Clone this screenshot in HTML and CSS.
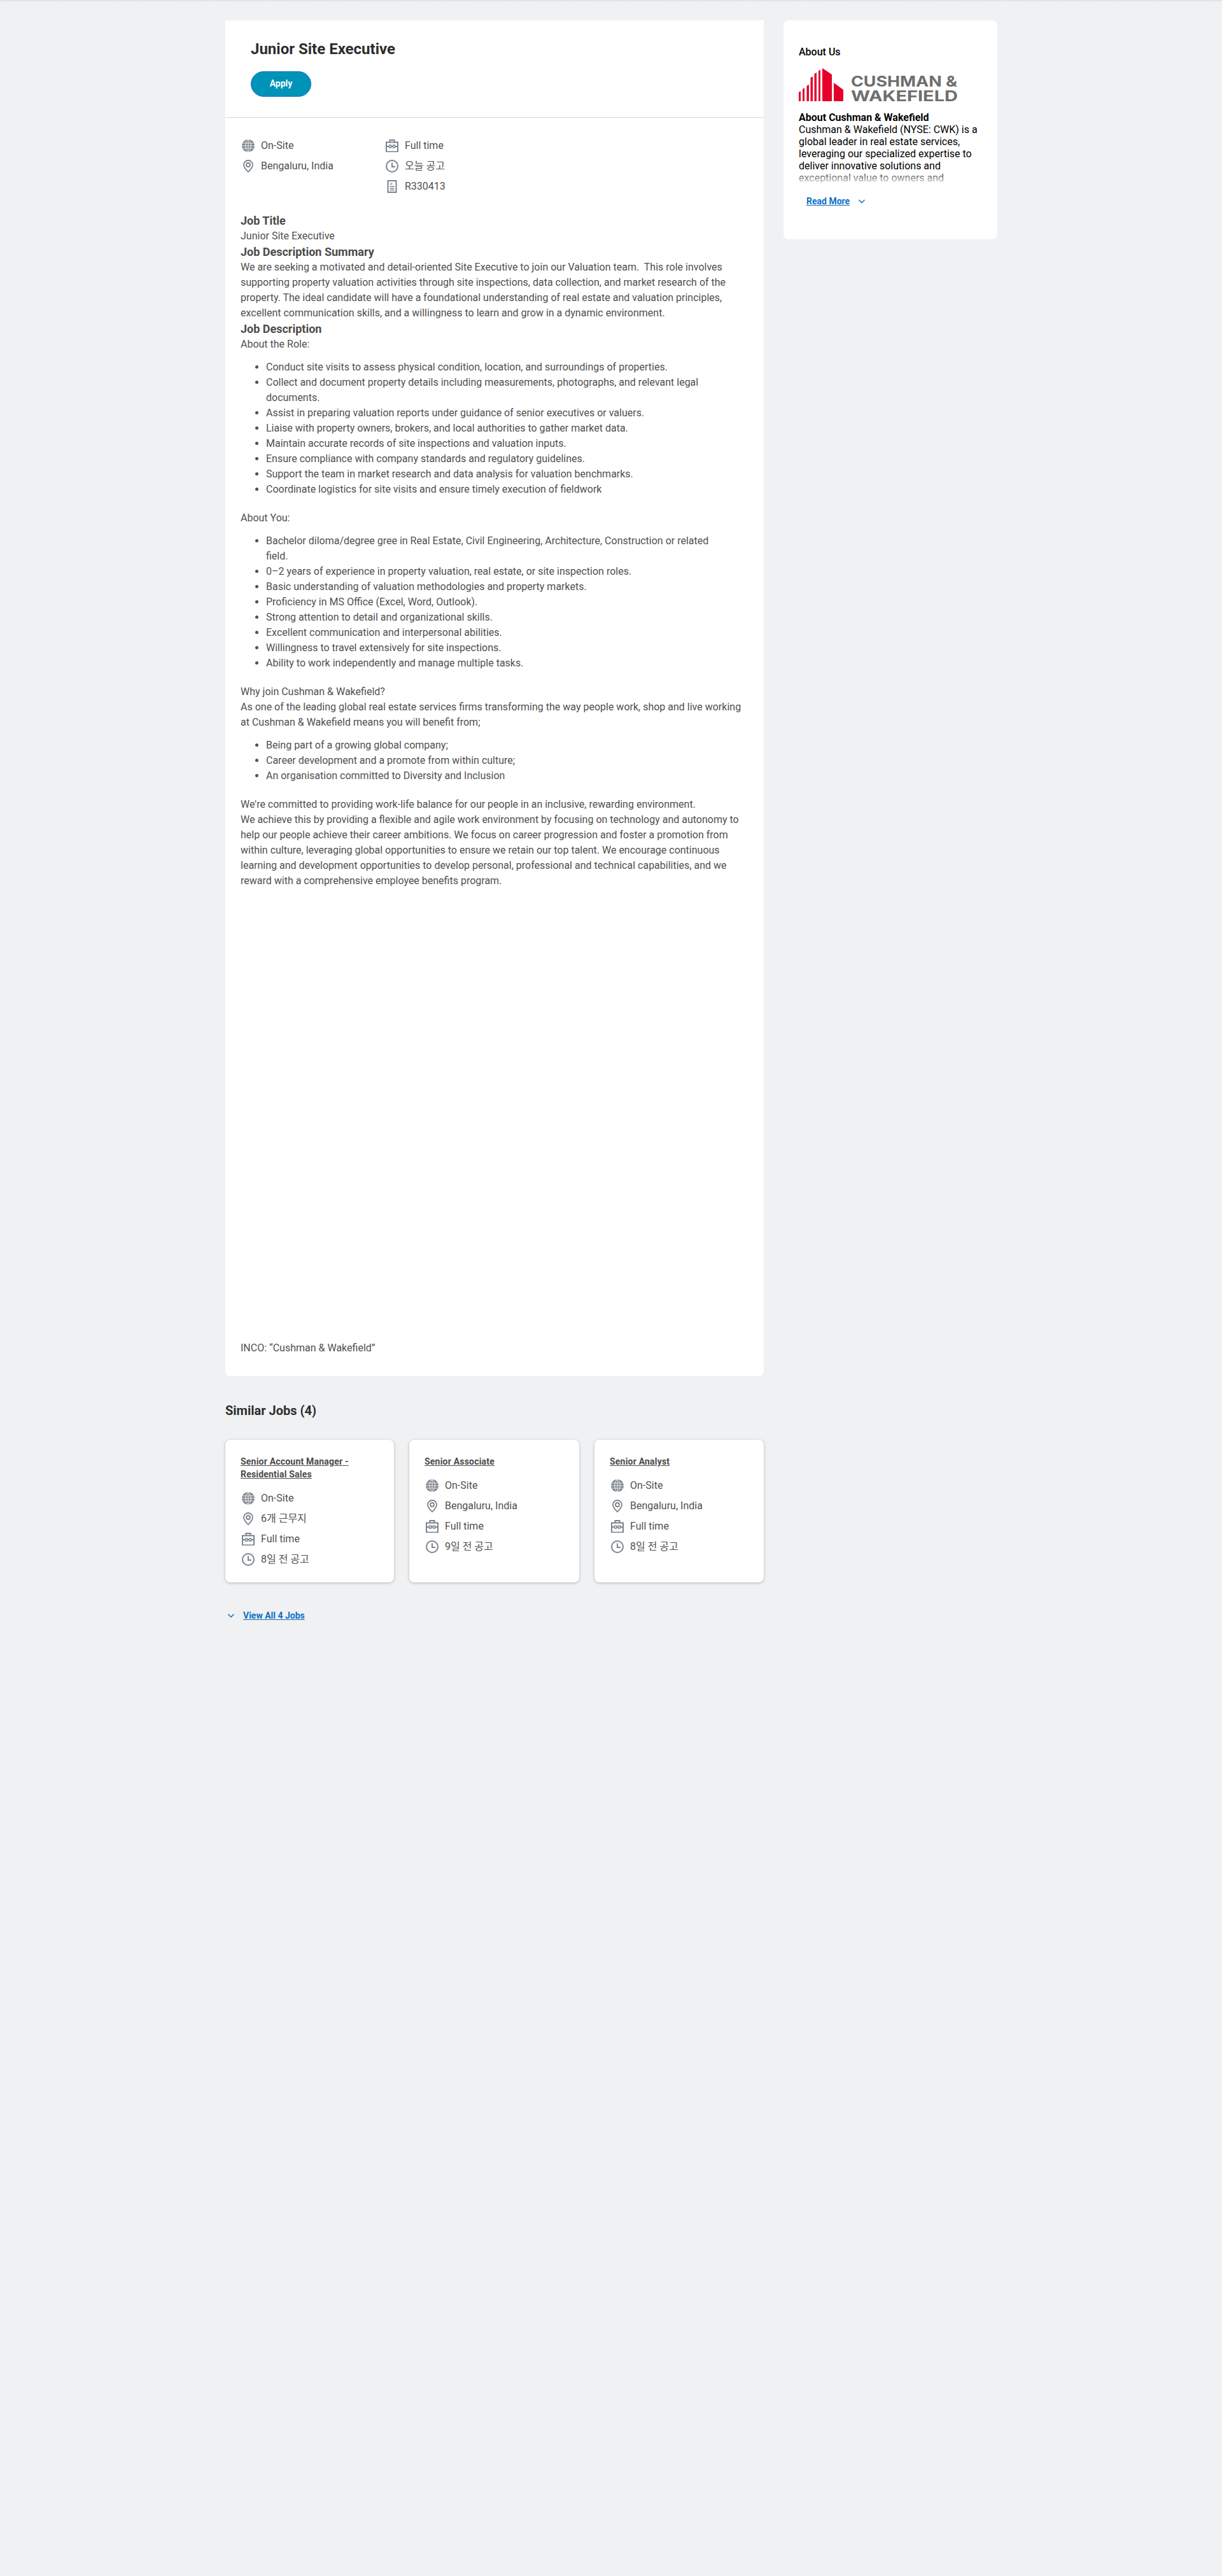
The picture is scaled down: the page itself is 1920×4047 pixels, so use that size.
FILE: index.html
```html
<!DOCTYPE html>
<html lang="en">
<head>
    <meta charset="UTF-8">
    <meta name="viewport" content="width=device-width, initial-scale=1.0">
    <title>Junior Site Executive</title>
    <link rel="stylesheet" href="styles.css">
</head>
<body>
    <svg class="sprite" width="0" height="0" aria-hidden="true">
        <symbol id="i-globe" viewBox="0 0 20 20">
            <circle cx="10" cy="10" r="10" fill="#7b838c"/>
            <g fill="none" stroke="#fff" stroke-width="0.9">
                <ellipse cx="10" cy="10" rx="4.2" ry="9.5"/>
                <path d="M10 0v20M1.500 6h17M0 10h20M1.500 14h17"/>
            </g>
        </symbol>
        <symbol id="i-pin" viewBox="0 0 20 20">
            <path d="M10 1a7 7 0 0 0-7 7c0 4.500 4.500 8.500 7 11 2.500-2.500 7-6.500 7-11a7 7 0 0 0-7-7z" fill="none" stroke="#7b838c" stroke-width="1.800"/>
            <circle cx="10" cy="8" r="3" fill="none" stroke="#7b838c" stroke-width="1.800"/>
        </symbol>
        <symbol id="i-case" viewBox="0 0 20 20">
            <path d="M6.500 4V1h7v3M1 4.500h18v15H1zM1 11h4.500M14.500 11H19M8.500 11h3" fill="none" stroke="#7b838c" stroke-width="2"/>
            <path d="M5.500 9h3v4h-3zM11.500 9h3v4h-3z" fill="none" stroke="#7b838c" stroke-width="1.300"/>
        </symbol>
        <symbol id="i-clock" viewBox="0 0 20 20">
            <circle cx="10" cy="10" r="9" fill="none" stroke="#7b838c" stroke-width="2"/>
            <path d="M10 4.500V11h5" fill="none" stroke="#7b838c" stroke-width="2"/>
        </symbol>
        <symbol id="i-doc" viewBox="0 0 20 20">
            <path d="M3.500 1h13v18h-13z" fill="none" stroke="#7b838c" stroke-width="2"/>
            <path d="M6.500 6h4M6.500 10h7M6.500 12.800h7M6.500 15.500h7" fill="none" stroke="#7b838c" stroke-width="1.300"/>
        </symbol>
        <symbol id="i-chev" viewBox="0 0 12 12">
            <path d="M1.500 4l4.500 4.500L10.500 4" fill="none" stroke="#0f6fc6" stroke-width="1.500"/>
        </symbol>
    </svg>

    <div class="topbar"></div>

    <div class="page">
        <main class="main-col">
            <section class="job-card">
                <header class="job-head">
                    <h1>Junior Site Executive</h1>
                    <a class="btn-apply" href="#">Apply</a>
                </header>

                <div class="job-body">
                    <div class="job-meta">
                        <div class="meta-col">
                            <div class="meta-row"><svg class="icon"><use href="#i-globe"/></svg><span>On-Site</span></div>
                            <div class="meta-row"><svg class="icon"><use href="#i-pin"/></svg><span>Bengaluru, India</span></div>
                        </div>
                        <div class="meta-col">
                            <div class="meta-row"><svg class="icon"><use href="#i-case"/></svg><span>Full time</span></div>
                            <div class="meta-row"><svg class="icon"><use href="#i-clock"/></svg><span>오늘 공고</span></div>
                            <div class="meta-row"><svg class="icon"><use href="#i-doc"/></svg><span>R330413</span></div>
                        </div>
                    </div>

                    <div class="job-text">
                        <h2>Job Title</h2>
                        <div>Junior Site Executive</div>
                        <h2>Job Description Summary</h2>
                        <div>We are seeking a motivated and detail-oriented Site Executive to join our Valuation team.&nbsp; This role involves supporting property valuation activities through site inspections, data collection, and market research of the property. The ideal candidate will have a foundational understanding of real estate and valuation principles, excellent communication skills, and a willingness to learn and grow in a dynamic environment.</div>
                        <h2>Job Description</h2>
                        <p class="first">About the Role:</p>
                        <ul>
                            <li>Conduct site visits to assess physical condition, location, and surroundings of properties.</li>
                            <li>Collect and document property details including measurements, photographs, and relevant legal documents.</li>
                            <li>Assist in preparing valuation reports under guidance of senior executives or valuers.</li>
                            <li>Liaise with property owners, brokers, and local authorities to gather market data.</li>
                            <li>Maintain accurate records of site inspections and valuation inputs.</li>
                            <li>Ensure compliance with company standards and regulatory guidelines.</li>
                            <li>Support the team in market research and data analysis for valuation benchmarks.</li>
                            <li>Coordinate logistics for site visits and ensure timely execution of fieldwork</li>
                        </ul>
                        <p>About You:</p>
                        <ul>
                            <li>Bachelor diloma/degree gree in Real Estate, Civil Engineering, Architecture, Construction or related<br>field.</li>
                            <li>0–2 years of experience in property valuation, real estate, or site inspection roles.</li>
                            <li>Basic understanding of valuation methodologies and property markets.</li>
                            <li>Proficiency in MS Office (Excel, Word, Outlook).</li>
                            <li>Strong attention to detail and organizational skills.</li>
                            <li>Excellent communication and interpersonal abilities.</li>
                            <li>Willingness to travel extensively for site inspections.</li>
                            <li>Ability to work independently and manage multiple tasks.</li>
                        </ul>
                        <p>Why join Cushman &amp; Wakefield?<br>As one of the leading global real estate services firms transforming the way people work, shop and live working at Cushman &amp; Wakefield means you will benefit from;</p>
                        <ul>
                            <li>Being part of a growing global company;</li>
                            <li>Career development and a promote from within culture;</li>
                            <li>An organisation committed to Diversity and Inclusion</li>
                        </ul>
                        <p>We're committed to providing work-life balance for our people in an inclusive, rewarding environment.<br>We achieve this by providing a flexible and agile work environment by focusing on technology and autonomy to help our people achieve their career ambitions. We focus on career progression and foster a promotion from within culture, leveraging global opportunities to ensure we retain our top talent. We encourage continuous learning and development opportunities to develop personal, professional and technical capabilities, and we reward with a comprehensive employee benefits program.</p>
                        <p class="inco">INCO: “Cushman &amp; Wakefield”</p>
                    </div>
                </div>
            </section>

            <h3 class="similar-title">Similar Jobs (4)</h3>
            <div class="similar-grid">
                <article class="similar-card">
                    <a class="similar-link" href="#">Senior Account Manager - Residential Sales</a>
                    <div class="meta-row"><svg class="icon"><use href="#i-globe"/></svg><span>On-Site</span></div>
                    <div class="meta-row"><svg class="icon"><use href="#i-pin"/></svg><span>6개 근무지</span></div>
                    <div class="meta-row"><svg class="icon"><use href="#i-case"/></svg><span>Full time</span></div>
                    <div class="meta-row"><svg class="icon"><use href="#i-clock"/></svg><span>8일 전 공고</span></div>
                </article>
                <article class="similar-card">
                    <a class="similar-link" href="#">Senior Associate</a>
                    <div class="meta-row"><svg class="icon"><use href="#i-globe"/></svg><span>On-Site</span></div>
                    <div class="meta-row"><svg class="icon"><use href="#i-pin"/></svg><span>Bengaluru, India</span></div>
                    <div class="meta-row"><svg class="icon"><use href="#i-case"/></svg><span>Full time</span></div>
                    <div class="meta-row"><svg class="icon"><use href="#i-clock"/></svg><span>9일 전 공고</span></div>
                </article>
                <article class="similar-card">
                    <a class="similar-link" href="#">Senior Analyst</a>
                    <div class="meta-row"><svg class="icon"><use href="#i-globe"/></svg><span>On-Site</span></div>
                    <div class="meta-row"><svg class="icon"><use href="#i-pin"/></svg><span>Bengaluru, India</span></div>
                    <div class="meta-row"><svg class="icon"><use href="#i-case"/></svg><span>Full time</span></div>
                    <div class="meta-row"><svg class="icon"><use href="#i-clock"/></svg><span>8일 전 공고</span></div>
                </article>
            </div>
            <div class="view-all">
                <svg class="chev"><use href="#i-chev"/></svg>
                <a href="#">View All 4 Jobs</a>
            </div>
        </main>

        <aside class="about-card">
            <h3>About Us</h3>
            <svg class="logo" viewBox="0 0 250 58" width="250" height="58" role="img" aria-label="Cushman &amp; Wakefield">
                <path fill="#e4002b" d="M0 38l3-2v16H0zM6 33l3-2v21H6zM12.500 28l3.500-2v26h-3.500zM18.500 15l3.500-2v39h-3.500zM24.500 9l3.500-2v45h-3.500zM31 4.500l3-2V52h-3zM37 0l15 10v42H37zM55 23l15 11v18H55z"/>
                <text class="logo-text" x="82" y="28.500" textLength="167" lengthAdjust="spacingAndGlyphs">CUSHMAN &amp;</text>
                <text class="logo-text" x="82" y="51.500" textLength="168" lengthAdjust="spacingAndGlyphs">WAKEFIELD</text>
            </svg>
            <div class="about-text">
                <strong>About Cushman &amp; Wakefield</strong><br>
                Cushman &amp; Wakefield (NYSE: CWK) is a global leader in real estate services, leveraging our specialized expertise to deliver innovative solutions and exceptional value to owners and occupiers. With 52,000 employees
                <div class="about-fade"></div>
            </div>
            <div class="read-more">
                <a href="#">Read More</a>
                <svg class="chev"><use href="#i-chev"/></svg>
            </div>
        </aside>
    </div>
</body>
</html>
```

FILE: styles.css
```css
* {
    box-sizing: border-box;
}
html, body {
    margin: 0;
    padding: 0;
}
body {
    min-height: 4047px;
    background-color: #eff1f3;
    color: #505050;
    font-family: Roboto, "Noto Sans CJK KR", sans-serif;
    font-size: 16px;
    line-height: 24px;
}
.sprite {
    display: block;
    height: 0;
}
.topbar {
    height: 3px;
    background: linear-gradient(#dcdee1, #eff1f3);
}
.page {
    display: flex;
    align-items: flex-start;
    gap: 31px;
    width: 1213px;
    margin: 29px 0 0 354px;
}
.main-col {
    width: 846px;
    flex: none;
}
.job-card {
    background-color: #fff;
    border-radius: 0 0 8px 8px;
}
.job-head {
    height: 153px;
    padding: 29px 40px 0;
    border-bottom: 1px solid #d4d7db;
}
.job-head h1 {
    margin: 0;
    font-size: 24px;
    line-height: 32px;
    font-weight: 700;
    color: #2d2d2d;
}
.btn-apply {
    display: block;
    width: 95px;
    height: 40px;
    margin-top: 19px;
    border: 1.5px solid #0b72c4;
    border-radius: 20px;
    background-color: #0093b8;
    color: #fff;
    font-size: 14px;
    font-weight: 700;
    line-height: 37px;
    text-align: center;
    text-decoration: none;
}
.job-body {
    padding: 28px 24px 32px;
}
.job-meta {
    display: flex;
    margin-bottom: 25px;
}
.meta-col {
    width: 226px;
    padding-left: 2px;
}
.meta-row {
    display: flex;
    align-items: center;
    height: 32px;
}
.icon {
    width: 20px;
    height: 20px;
    margin-right: 10px;
    flex: none;
}
.job-text h2 {
    margin: 0;
    font-size: 18px;
    line-height: 25px;
    font-weight: 700;
    color: #4a4a4a;
}
.job-text p {
    margin: 21px 0 0;
}
.job-text p.first {
    margin-top: 0;
}
.job-text ul {
    margin: 12px 0 0;
    padding-left: 40px;
}
.job-text p.inco {
    margin-top: 710px;
}
.similar-title {
    margin: 40px 0 0;
    font-size: 20px;
    line-height: 28px;
    font-weight: 700;
    color: #2d2d2d;
}
.similar-grid {
    display: grid;
    grid-template-columns: 265px 267px 266px;
    gap: 24px;
    margin-top: 32px;
}
.similar-card {
    height: 224px;
    padding: 24px;
    border-radius: 8px;
    background-color: #fff;
    box-shadow: 0 1px 4px rgba(0,0,0,0.25);
}
.similar-link {
    display: block;
    margin-bottom: 12px;
    font-size: 14px;
    line-height: 20px;
    font-weight: 700;
    letter-spacing: 0.2px;
    color: #4a4a4a;
    text-decoration: underline;
}
.similar-card .meta-row {
    padding-left: 2px;
}
.view-all {
    display: flex;
    align-items: center;
    gap: 13px;
    margin-top: 40px;
    padding-left: 3px;
    font-size: 14px;
    font-weight: 700;
}
.view-all a, .read-more a {
    color: #0f6fc6;
}
.chev {
    width: 12px;
    height: 12px;
    flex: none;
}
.about-card {
    width: 336px;
    height: 344px;
    flex: none;
    padding: 36px 24px 0;
    border-radius: 8px;
    background-color: #fff;
    color: #000;
}
.about-card h3 {
    margin: 0;
    font-size: 16px;
    line-height: 28px;
    font-weight: 500;
}
.logo {
    display: block;
    margin-top: 11px;
}
.logo-text {
    font-family: Inter, sans-serif;
    font-size: 23px;
    font-weight: 700;
    fill: #6e6e70;
}
.about-text {
    position: relative;
    height: 121px;
    margin-top: 10px;
    overflow: hidden;
    font-size: 16px;
    line-height: 19px;
}
.about-fade {
    position: absolute;
    left: 0;
    right: 0;
    bottom: 0;
    height: 30px;
    background: linear-gradient(rgba(255,255,255,0), #fff 85%);
}
.read-more {
    display: flex;
    align-items: center;
    gap: 13px;
    margin-top: 8px;
    padding-left: 12px;
    font-size: 14px;
    font-weight: 700;
}
```
